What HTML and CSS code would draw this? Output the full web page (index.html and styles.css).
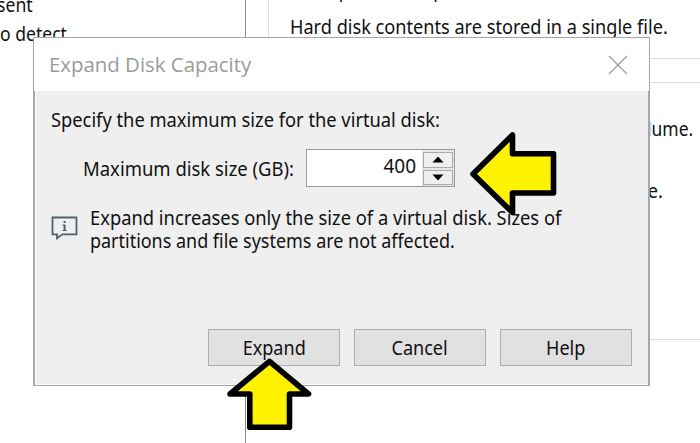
FILE: index.html
```html
<!DOCTYPE html>
<html lang="en">
<head>
<meta charset="utf-8">
<title>Expand Disk Capacity</title>
<link rel="stylesheet" href="styles.css">
</head>
<body>
<div class="settings">
  <div class="devices">
    <p><span class="t sent">sent</span></p>
    <p><span class="t detect">o detect</span></p>
  </div>
  <div class="details">
    <section class="group info">
      <p><span class="t space">Disk space is not preallocated</span></p>
      <p><span class="t hard">Hard disk contents are stored in a single file.</span></p>
    </section>
    <section class="group utilities">
      <p><span class="t lume">lume.</span></p>
      <p class="second"><span class="t ce">ce.</span></p>
    </section>
  </div>
</div>

<div class="dialog" role="dialog">
  <header class="titlebar">
    <h1><span class="t title">Expand Disk Capacity</span></h1>
    <svg class="close" width="20" height="20" viewBox="0 0 20 20"><path d="M1 1 19 19M19 1 1 19"/></svg>
  </header>
  <main class="content">
    <p class="prompt"><span class="t specify">Specify the maximum size for the virtual disk:</span></p>
    <div class="size-row">
      <label><span class="t max">Maximum disk size (GB):</span></label>
      <div class="spinner">
        <div class="value"><span class="t num">400</span></div>
        <div class="steps">
          <div class="step"><svg width="12" height="7" viewBox="0 0 12 7"><path d="M0.5 6.5 6 .5 11.5 6.5Z"/></svg></div>
          <div class="step"><svg width="12" height="7" viewBox="0 0 12 7"><path d="M0.5 .5 6 6.5 11.5 .5Z"/></svg></div>
        </div>
      </div>
    </div>
    <div class="note">
      <svg class="bubble" width="28" height="24" viewBox="0 0 28 24"><path class="frame" d="M1.5 1.5H25.5V18.3H11.5L6 22.3V18.3H1.5Z"/><path class="i" d="M12.6 5h2v2h-2zM12.6 8.5h2v6h-2zM11.5 8.5h2v1h-2zM11.5 14h4.2v1h-4.2z"/></svg>
      <p><span class="t n1">Expand increases only the size of a virtual disk. Sizes of</span><br><span class="t n2">partitions and file systems are not affected.</span></p>
    </div>
    <div class="buttons">
      <div class="button"><span class="t b">Expand</span></div>
      <div class="button"><span class="t b">Cancel</span></div>
      <div class="button"><span class="t b">Help</span></div>
    </div>
  </main>
</div>

<svg class="arrow left" width="90" height="86" viewBox="470 130 90 86"><path d="M473 174 512.5 135V153.7H553.5V193H512.5V212.5Z"/></svg>
<svg class="arrow up" width="90" height="76" viewBox="225 356 90 76"><path d="M269.5 361.3 308.5 394H289.5V427.3H249.8V394H230Z"/></svg>
</body>
</html>
```
FILE: styles.css
```css
* { box-sizing: border-box; }
body {
  margin: 0;
  width: 700px;
  height: 443px;
  overflow: hidden;
  background: #fff;
  color: #111;
  font: 19px/24px "Noto Sans", "Open Sans", sans-serif;
}
p, h1 { margin: 0; white-space: nowrap; }
.t { display: inline-block; transform-origin: 0 50%; }
.sent { margin-left: -3px; transform: scaleX(.93); }
.detect { transform: scaleX(.925); }
.space { transform: scaleX(.935); }
.hard { transform: scaleX(.955); }
.lume { transform: scaleX(.92); }
.ce { transform: scaleX(.955); }
.title { transform: scaleX(1.02); }
.specify { transform: scaleX(.963); }
.max { transform: scaleX(.972); }
.n1 { transform: scaleX(.965); }
.n2 { transform: scaleX(.945); }

.settings { display: flex; height: 443px; }
.devices { width: 246px; border-right: 1px solid #858b96; overflow: hidden; }
.devices p { height: 29px; margin-top: -7px; }
.devices p + p { margin-top: 0; }
.details { flex: 1; padding-left: 22px; }
.group { border: 1px solid #dcdcdc; border-right: 0; padding-left: 21px; }
.info { height: 59px; border-top: 0; overflow: hidden; }
.info p { height: 29px; margin-top: -22px; }
.info p + p { margin-top: 8px; }
.utilities { height: 258px; margin-top: 23px; padding: 34px 0 0 378px; }
.utilities .second { margin-top: 38px; }
.ce { margin-left: -8px; }

.dialog {
  position: absolute;
  left: 33px;
  top: 37px;
  width: 617px;
  height: 349px;
  background: #efefef;
  border: 1px solid #a6a6a6;
  display: flex;
  flex-direction: column;
}
.titlebar {
  height: 53px;
  background: #fff;
  display: flex;
  align-items: center;
  justify-content: space-between;
  padding: 0 21px 0 15px;
}
.titlebar h1 { font: 400 20px/26px "Open Sans", sans-serif; color: #9b9b9b; }
.close { fill: none; stroke: #999; stroke-width: 1.1; }
.content {
  flex: 1;
  display: flex;
  flex-direction: column;
  border: solid #a9a9a9;
  border-width: 0 1px;
  box-shadow: inset 1px -1px #fafafa;
  padding: 17px 16px 19px 16px;
}
.prompt { height: 24px; }
.size-row { display: flex; height: 38px; margin-top: 17px; padding-left: 32px; align-items: center; }
.size-row label { width: 223px; white-space: nowrap; padding-top: 2px; }
.spinner { display: flex; width: 149px; height: 38px; border: 1px solid #999; background: #fff; }
.value { flex: 1; display: flex; justify-content: flex-end; padding: 4px 6px 0 0; }
.steps { width: 32px; background: #e8e8e8; padding: 2px 1px 1px; display: flex; flex-direction: column; gap: 2px; }
.step { flex: 1; border: 1px solid #aaa; display: flex; align-items: center; justify-content: center; background: #efefef; }
.step path { fill: #000; }
.note { display: flex; height: 48px; margin-top: 19px; }
.bubble { width: 28px; margin: 10px 11px 0 0; flex: none; }
.bubble .frame { fill: none; stroke: #53606b; stroke-width: 1.8; }
.bubble .i { fill: #53606b; }
.note p { line-height: 23px; padding-top: 1px; }
.buttons { display: flex; justify-content: flex-end; gap: 14px; margin-top: auto; }
.button { width: 132px; height: 37px; border: 1px solid #adadad; background: #e1e1e1; display: flex; align-items: center; justify-content: center; }
.button .t { transform-origin: 50% 50%; transform: scaleX(.95); }

.arrow { position: absolute; overflow: visible; }
.arrow path { fill: #fff200; stroke: #000; stroke-width: 5.6; stroke-linejoin: round; }
.left { left: 470px; top: 130px; }
.up { left: 225px; top: 356px; }
```
